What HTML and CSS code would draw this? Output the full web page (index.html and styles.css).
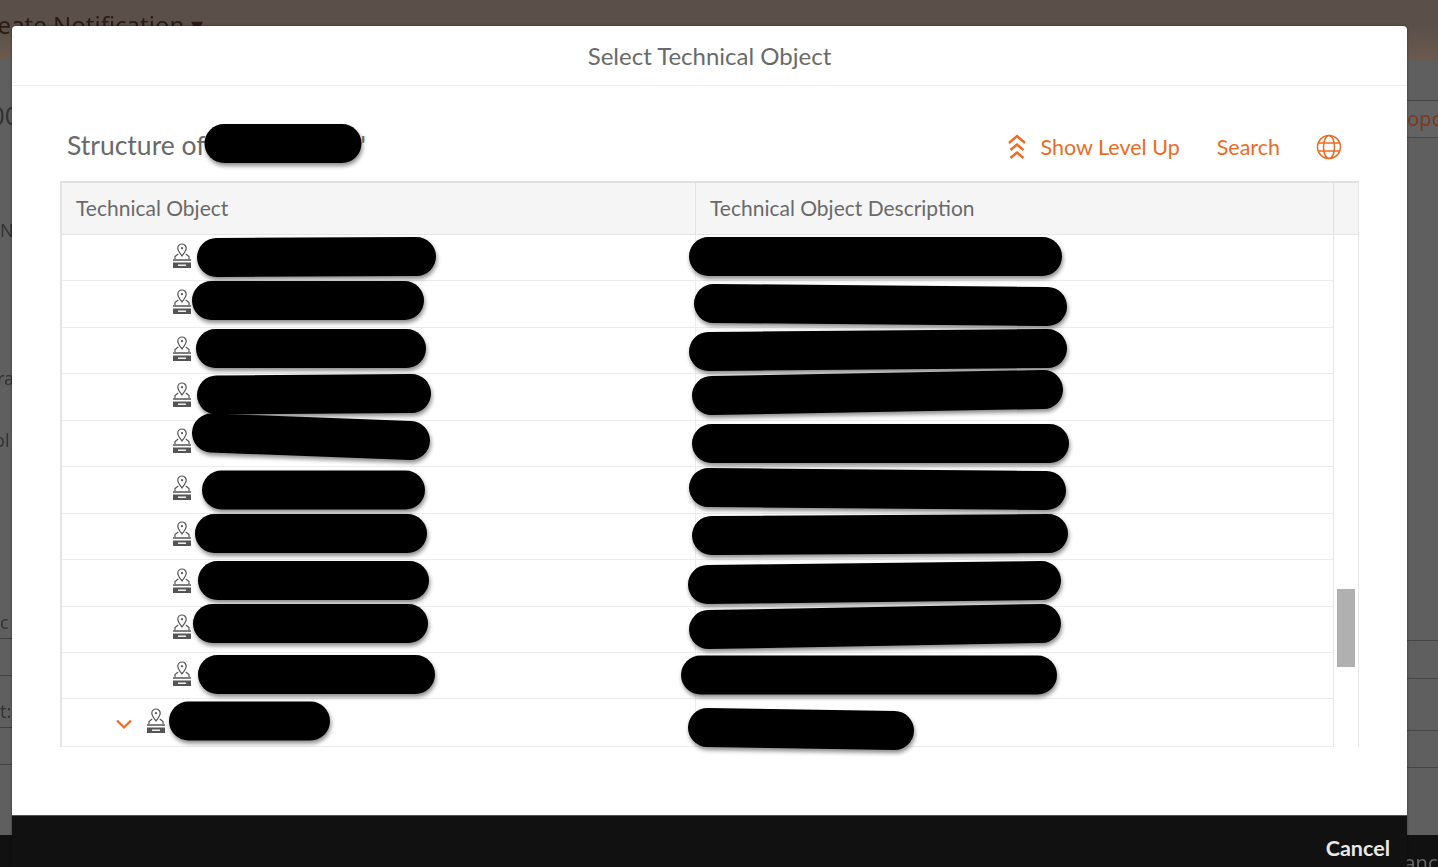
FILE: index.html
```html
<!DOCTYPE html>
<html lang="en">
<head>
    <meta charset="UTF-8">
    <title>Select Technical Object</title>
    <link rel="stylesheet" href="styles.css">
</head>
<body>
    <!-- Page behind the dialog, only its edges stay visible -->
    <div class="backdrop">
        <div class="page-title"><span>Create Notification ▾</span></div>
        <div class="page-body">
            <div class="strip strip-left">
                <div class="strip-text s1">00</div>
                <div class="strip-text s2">N</div>
                <div class="strip-text s3">ra</div>
                <div class="strip-text s4">ol</div>
                <div class="strip-text s5">c</div>
                <div class="strip-text s6">t:</div>
                <div class="strip-text s7"></div>
            </div>
            <div class="strip strip-right">
                <div class="opo">opo</div>
                <div class="strip-lines"></div>
            </div>
        </div>
        <div class="page-footer"><span>Cancel</span></div>
    </div>

    <div class="dialog">
        <header class="dialog-header">Select Technical Object</header>

        <div class="dialog-body">
            <div class="toolbar">
                <h2 class="structure-title">Structure of<span class="name-gap"></span>'</h2>
                <div class="actions">
                    <a class="action level-up">
                        <svg width="20" height="26" viewBox="0 0 20 26" fill="none" stroke="currentColor" stroke-width="2.4">
                            <path d="M2 9 L10 2 L18 9"/>
                            <path d="M3.5 16 L10 10.5 L16.5 16"/>
                            <path d="M3.5 24 L10 18.5 L16.5 24"/>
                        </svg>
                        Show Level Up
                    </a>
                    <a class="action">Search</a>
                    <svg class="globe" width="26" height="26" viewBox="0 0 26 26" fill="none" stroke="currentColor" stroke-width="1.5">
                        <circle cx="13" cy="13" r="11.5"/>
                        <ellipse cx="13" cy="13" rx="5.5" ry="11.5"/>
                        <path d="M2.5 9 H23.5 M2.5 17 H23.5"/>
                    </svg>
                </div>
            </div>

            <div class="tree-table">
                <div class="tree-head">
                    <div class="col-object">Technical Object</div>
                    <div class="col-desc">Technical Object Description</div>
                    <div class="col-scroll"></div>
                </div>
                <div class="tree-rows" id="rows">
                    <div class="scroll-thumb"></div>
                </div>
            </div>
        </div>

        <footer class="dialog-footer"><span class="cancel">Cancel</span></footer>
    </div>

    <!-- Marker strokes drawn over the screenshot -->
    <svg class="redactions" width="1438" height="867" viewBox="0 0 1438 867" fill="none" stroke="#000" stroke-width="39" stroke-linecap="round">
        <path d="M224 143.5 H342"/>
        <path d="M216.5 257.5 L416.5 256.5"/>
        <path d="M211.5 300.5 H404.5"/>
        <path d="M215.5 348.5 H406.5"/>
        <path d="M216.5 395 L411.5 393.5"/>
        <path d="M211.5 433 L410.5 440.5"/>
        <path d="M221.5 490 H405.5"/>
        <path d="M214.5 533.5 H407.5"/>
        <path d="M217.5 580.5 H409.5"/>
        <path d="M212.5 623.5 H408.5"/>
        <path d="M217.5 674.5 H415.5"/>
        <path d="M188.5 721 H310.5"/>
        <path d="M708.5 256.5 H1042.5"/>
        <path d="M713.5 303.5 L1047.5 306.5"/>
        <path d="M708.5 351.5 L1047.5 348.5"/>
        <path d="M711.5 395.5 L1043.5 389.5"/>
        <path d="M711.5 443.5 H1049.5"/>
        <path d="M708.5 487.5 L1046.5 490.5"/>
        <path d="M711.5 535.5 L1048.5 533.5"/>
        <path d="M707.5 584.5 L1041.5 580.5"/>
        <path d="M708.5 629.5 L1041.5 623.5"/>
        <path d="M700.5 675 H1037.5"/>
        <path d="M707.5 727.5 L894.5 730.5"/>
    </svg>

    <template id="location-icon">
        <svg class="loc-icon" width="20" height="26" viewBox="0 0 20 26" fill="none" stroke="currentColor" stroke-width="1.2">
            <path d="M10 13 C7.5 9.5 5.8 7.5 5.8 5.2 A4.2 4.2 0 0 1 14.2 5.2 C14.2 7.5 12.5 9.5 10 13 Z"/>
            <circle cx="10" cy="5.2" r="1.1" fill="currentColor" stroke="none"/>
            <path d="M6.2 11 L3 13.5 V16 M13.8 11 L17 13.5 V16"/>
            <path d="M1 17 H19" stroke-width="1.5"/>
            <path d="M1 19.5 H19 V25 H1 Z M6 22.2 H14" fill="#555" stroke="none"/>
            <path d="M6 22.2 H14" stroke="#fff" stroke-width="1.4"/>
        </svg>
    </template>

    <script>
        const rowsEl = document.getElementById('rows');
        const iconTpl = document.getElementById('location-icon');

        for (let i = 0; i < 11; i++) {
            const last = i === 10;
            const row = document.createElement('div');
            row.className = last ? 'tree-row expandable' : 'tree-row';

            const cell = document.createElement('div');
            cell.className = 'cell-object';
            if (last) {
                const arrow = document.createElementNS('http://www.w3.org/2000/svg', 'svg');
                arrow.setAttribute('class', 'expander');
                arrow.setAttribute('width', '18');
                arrow.setAttribute('height', '12');
                arrow.setAttribute('viewBox', '0 0 18 12');
                arrow.innerHTML = '<path d="M2 2.5 L9 9.5 L16 2.5" fill="none" stroke="currentColor" stroke-width="2.2"/>';
                cell.appendChild(arrow);
            }
            cell.appendChild(iconTpl.content.cloneNode(true));
            row.appendChild(cell);

            const desc = document.createElement('div');
            desc.className = 'cell-desc';
            row.appendChild(desc);
            rowsEl.appendChild(row);
        }
    </script>
</body>
</html>
```

FILE: styles.css
```css
* {
    box-sizing: border-box;
}

html, body {
    margin: 0;
    height: 867px;
    overflow: hidden;
}

body {
    position: relative;
    font-family: Lato, "Noto Sans", sans-serif;
    color: #6a6a6a;
    background-color: #5f5f5f;
}

/* page behind the dialog */
.backdrop {
    height: 867px;
    display: flex;
    flex-direction: column;
    filter: blur(0.6px);
    font-family: "Noto Sans", sans-serif;
}

.page-title {
    height: 60px;
    background: linear-gradient(#5a4f49, #5a4f49 40%, #6b5a4e);
    font-size: 24px;
    color: #2c1a14;
    overflow: hidden;
    white-space: nowrap;
    padding-top: 8px;
}

.page-title span {
    margin-left: -27px;
}

.page-body {
    flex: 1;
    display: flex;
    justify-content: space-between;
    background-color: #5f5f5f;
}

.strip {
    overflow: hidden;
}

.strip-left {
    width: 12px;
    font-size: 18px;
    line-height: 24px;
    color: #333;
    white-space: nowrap;
}

.strip-text.s1 {
    font-size: 26px;
    line-height: 36px;
    margin-top: 37px;
    margin-left: -10px;
}

.strip-text.s2 {
    margin-top: 85px;
}

.strip-text.s3 {
    margin-top: 124px;
    margin-left: -3px;
}

.strip-text.s4 {
    margin-top: 38px;
    margin-left: -6px;
}

.strip-text.s5 {
    margin-top: 158px;
    padding-bottom: 4px;
    border-bottom: 1px solid #3f3f3f;
}

.strip-text.s6 {
    margin-top: 36px;
    border-top: 1px solid #3f3f3f;
    padding-top: 23px;
    padding-bottom: 4px;
    border-bottom: 1px solid #3f3f3f;
}

.strip-text.s7 {
    margin-top: 36px;
    border-top: 1px solid #3f3f3f;
}

.strip-right {
    width: 31px;
}

.opo {
    margin-top: 40px;
    height: 38px;
    border-top: 1px solid #454545;
    border-bottom: 1px solid #454545;
    background-color: #636363;
    color: #7a3a20;
    font-size: 20px;
    line-height: 36px;
    white-space: nowrap;
}

.strip-lines {
    height: 128px;
    margin-top: 502px;
    border-top: 1px solid #454545;
    border-bottom: 1px solid #454545;
    background: linear-gradient(#454545, #454545) 0 37px / 100% 1px no-repeat,
                linear-gradient(#454545, #454545) 0 89px / 100% 1px no-repeat;
}

.page-footer {
    height: 32px;
    background-color: #111;
    display: flex;
    justify-content: flex-end;
    overflow: hidden;
    color: #666;
    font-size: 20px;
    padding-top: 14px;
}

.page-footer span {
    margin-right: -16px;
}

/* dialog */
.dialog {
    position: absolute;
    left: 12px;
    top: 26px;
    width: 1395px;
    height: 841px;
    display: flex;
    flex-direction: column;
    background-color: #fff;
    border-radius: 4px 4px 0 0;
    box-shadow: 0 0 3px rgba(0, 0, 0, 0.4);
}

.dialog-header {
    height: 60px;
    flex-shrink: 0;
    display: flex;
    align-items: center;
    justify-content: center;
    font-size: 24px;
    color: #6a6a6a;
    border-bottom: 1px solid #eee;
}

.dialog-body {
    flex: 1;
    padding: 0 48px;
}

.toolbar {
    height: 95px;
    padding: 22px 17px 0 7px;
    display: flex;
    align-items: center;
    justify-content: space-between;
}

.structure-title {
    margin: 0;
    font-size: 26.5px;
    font-weight: 400;
    color: #6a6a6a;
}

.name-gap {
    display: inline-block;
    width: 155px;
}

.actions {
    display: flex;
    align-items: center;
    color: #ef6a23;
    padding-top: 4px;
}

.action {
    display: flex;
    align-items: center;
    gap: 14px;
    font-size: 21.5px;
    color: #ef6a23;
    margin-right: 36px;
}

.level-up {
    margin-right: 37px;
}

.globe {
    display: block;
}

.tree-table {
    border-top: 2px solid #e0e0e0;
    border-left: 2px solid #e5e5e5;
    border-right: 1px solid #e5e5e5;
    font-size: 21px;
}

.tree-head {
    height: 52px;
    display: flex;
    background-color: #f5f5f5;
    border-bottom: 1px solid #e5e5e5;
}

.col-object {
    width: 634px;
    padding: 12px 0 0 14px;
    border-right: 1px solid #e0e0e0;
}

.col-desc {
    width: 638px;
    padding: 12px 0 0 14px;
    border-right: 1px solid #e0e0e0;
}

.col-scroll {
    flex: 1;
}

.tree-rows {
    position: relative;
}

.tree-row {
    height: 46.45px;
    width: 1272px;
    display: flex;
    border-bottom: 1.5px solid #ececec;
    border-right: 1px solid #e5e5e5;
}

.tree-row.expandable {
    height: 48px;
}

.cell-object {
    width: 634px;
    padding-left: 110px;
    padding-bottom: 4px;
    display: flex;
    align-items: center;
    border-right: 1px solid #eee;
}

.expandable .cell-object {
    padding-left: 53px;
}

.cell-desc {
    flex: 1;
}

.loc-icon {
    color: #555;
    display: block;
}

.expander {
    color: #ef6a23;
    margin-right: 13px;
    margin-top: 6px;
}

.scroll-thumb {
    position: absolute;
    left: 1275px;
    top: 354px;
    width: 18px;
    height: 78px;
    background-color: #b0b0b0;
}

.dialog-footer {
    height: 52px;
    flex-shrink: 0;
    display: flex;
    align-items: center;
    justify-content: flex-end;
    padding: 12px 17px 0 0;
    background-color: #111;
    border-top: 1px solid #555;
}

.cancel {
    color: #e8e8e8;
    font-size: 21.5px;
    font-weight: 700;
}

/* marker strokes over everything */
.redactions {
    position: absolute;
    left: 0;
    top: 0;
    filter: drop-shadow(1px 3px 2px rgba(0, 0, 0, 0.45));
}
```
